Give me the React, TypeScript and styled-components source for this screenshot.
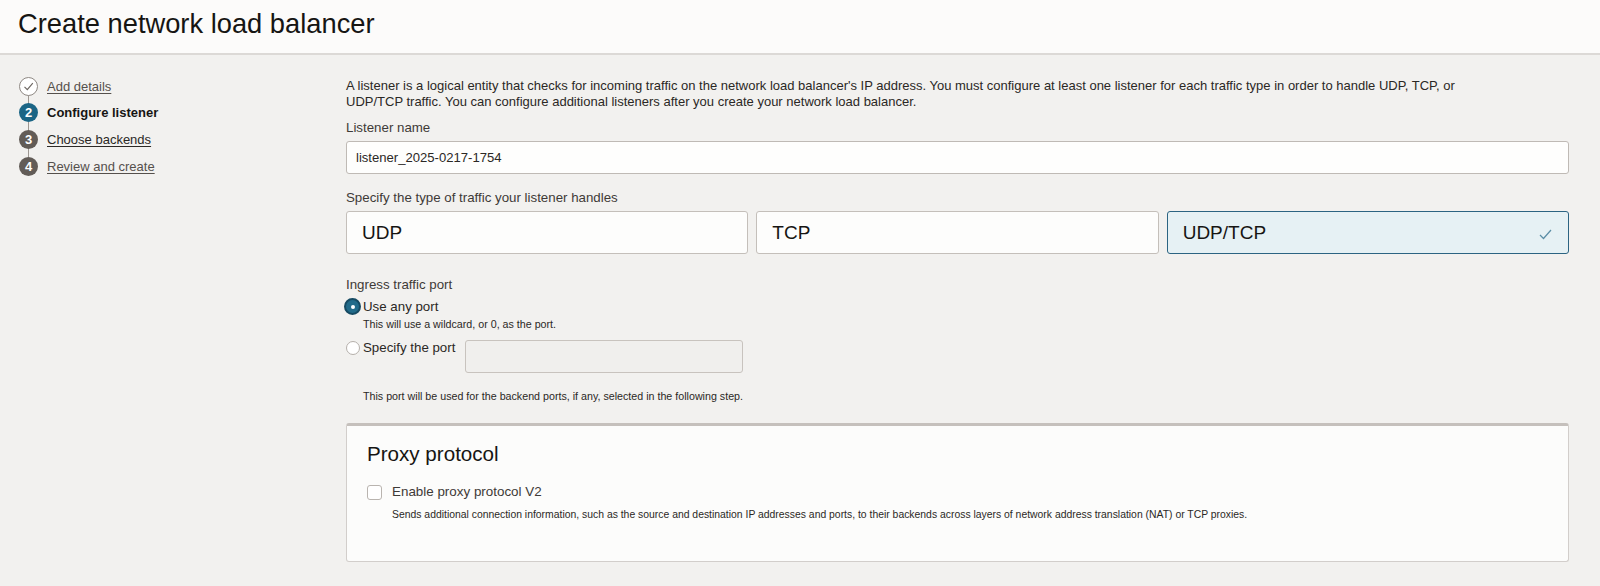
import React, { useState } from 'react';
import styled, { createGlobalStyle, css } from 'styled-components';

const GlobalStyle = createGlobalStyle`
  html, body {
    margin: 0;
    padding: 0;
    background: #f2f1ef;
    font-family: 'Liberation Sans', Arial, sans-serif;
    color: #161513;
  }
`;

const Page = styled.div`
  width: 1600px;
  height: 586px;
  background: #f2f1ef;
  overflow: hidden;
`;

const Header = styled.header`
  height: 55px;
  box-sizing: border-box;
  padding: 10px 0 0 18px;
  background: #fcfbfa;
  border-bottom: 2px solid #dcd9d6;

  h1 {
    margin: 0;
    font-size: 27.3px;
    line-height: 27px;
    font-weight: 400;
    color: #161513;
  }
`;

const Main = styled.div`
  display: flex;
  padding: 0 31px 0 19px;
`;

const Sidebar = styled.nav`
  width: 327px;
  flex-shrink: 0;
  padding-top: 18px;
`;

const StepList = styled.ol`
  list-style: none;
  margin: 0;
  padding: 0;
`;

const StepItem = styled.li`
  position: relative;
  display: flex;
  align-items: center;
  gap: 9px;
  height: 26.67px;

  &:not(:last-child)::after {
    content: '';
    position: absolute;
    left: 9px;
    top: 22px;
    height: 9px;
    width: 1px;
    background: #9e9892;
  }
`;

type StepState = 'done' | 'current' | 'todo';

const StepCircle = styled.span<{ $state: StepState }>`
  position: relative;
  z-index: 1;
  width: 19px;
  height: 19px;
  box-sizing: border-box;
  border-radius: 50%;
  display: flex;
  align-items: center;
  justify-content: center;
  font-size: 13px;
  font-weight: 700;
  color: #fff;
  flex-shrink: 0;

  ${({ $state }) =>
    $state === 'done'
      ? css`
          background: #fff;
          border: 1px solid #8f8984;
        `
      : $state === 'current'
        ? css`
            background: #1b6585;
          `
        : css`
            background: #625c57;
          `}
`;

const StepLabel = styled.a<{ $current?: boolean; $dark?: boolean }>`
  font-size: 13px;
  color: ${({ $dark }) => ($dark ? '#2c2926' : '#55504c')};
  text-decoration: underline;
  text-underline-offset: 2px;
  cursor: pointer;

  ${({ $current }) =>
    $current &&
    css`
      color: #161513;
      font-weight: 700;
      text-decoration: none;
    `}
`;

const Content = styled.section`
  flex: 1;
  padding-top: 23px;
`;

const Intro = styled.p`
  margin: 0;
  font-size: 13px;
  line-height: 16px;
  color: #2b2825;
`;

const FieldLabel = styled.div<{ $top?: number }>`
  font-size: 13.3px;
  line-height: 16px;
  color: #3e3a37;
  margin-top: ${({ $top }) => $top ?? 0}px;
  margin-bottom: 5px;
`;

const TextInput = styled.input`
  display: block;
  box-sizing: border-box;
  width: 100%;
  height: 33px;
  padding: 0 9px;
  border: 1px solid #bfbab5;
  border-radius: 3px;
  background: #fefefd;
  font-family: inherit;
  font-size: 13.1px;
  color: #2b2825;
  outline: none;
`;

const TileGrid = styled.div`
  display: grid;
  grid-template-columns: repeat(3, 1fr);
  gap: 8px;
`;

const Tile = styled.button<{ $selected: boolean }>`
  position: relative;
  height: 43px;
  box-sizing: border-box;
  display: flex;
  align-items: center;
  padding: 0 15px;
  border-radius: 3px;
  font-family: inherit;
  font-size: 19px;
  color: #161513;
  text-align: left;
  cursor: pointer;
  border: 1px solid ${({ $selected }) => ($selected ? '#2c6482' : '#c4bfba')};
  background: ${({ $selected }) => ($selected ? '#e6f1f4' : '#fdfdfc')};

  svg {
    position: absolute;
    right: 16px;
    top: 16px;
  }
`;

const RadioGroup = styled.div`
  display: flex;
  flex-direction: column;
`;

const RadioRow = styled.label`
  display: flex;
  align-items: flex-start;
  gap: 2px;
  margin-left: -2px;
  cursor: pointer;
`;

const RadioSlot = styled.span`
  width: 17px;
  height: 17px;
  flex-shrink: 0;
  display: flex;
  align-items: center;
  justify-content: center;
`;

const RadioDot = styled.span<{ $checked: boolean }>`
  box-sizing: border-box;
  border-radius: 50%;
  display: flex;
  align-items: center;
  justify-content: center;

  ${({ $checked }) =>
    $checked
      ? css`
          width: 17px;
          height: 17px;
          background: #226b8a;
          border: 2px solid #174b63;
          &::after {
            content: '';
            width: 4px;
            height: 4px;
            border-radius: 50%;
            background: #fff;
          }
        `
      : css`
          width: 14px;
          height: 14px;
          background: #fff;
          border: 1px solid #b5b0ab;
        `}
`;

const RadioText = styled.span`
  font-size: 13.3px;
  line-height: 17px;
  color: #2b2825;
`;

const HelpText = styled.div<{ $top?: number; $left?: number; $size?: number }>`
  font-size: ${({ $size }) => $size ?? 10.7}px;
  line-height: 12px;
  color: #2b2825;
  margin-top: ${({ $top }) => $top ?? 0}px;
  padding-left: ${({ $left }) => $left ?? 0}px;
`;

const PortRow = styled.div`
  display: flex;
  align-items: flex-start;
  margin-top: 9px;
`;

const PortInput = styled.input`
  box-sizing: border-box;
  width: 278px;
  height: 33px;
  margin-left: 10px;
  margin-top: 1px;
  border: 1px solid #c8c3be;
  border-radius: 3px;
  background: #f0efed;
`;

const Panel = styled.div`
  margin-top: 21px;
  box-sizing: border-box;
  height: 139px;
  background: #fcfcfb;
  border: 1px solid #d2cecb;
  border-top: 3px solid #c5c0bc;
  border-radius: 3px;
  padding: 16px 20px 0;

  h2 {
    margin: 0;
    font-size: 20.6px;
    line-height: 24px;
    font-weight: 400;
    color: #161513;
  }
`;

const CheckRow = styled.label`
  display: flex;
  align-items: center;
  gap: 10px;
  margin-top: 18px;
  cursor: pointer;
`;

const CheckBox = styled.span`
  width: 15px;
  height: 15px;
  box-sizing: border-box;
  border: 1px solid #b9b4af;
  border-radius: 3px;
  background: #fff;
`;

const CheckText = styled.span`
  font-size: 13.4px;
  line-height: 16px;
  color: #3e3a37;
`;

const steps: { label: string; state: StepState; dark?: boolean }[] = [
  { label: 'Add details', state: 'done' },
  { label: 'Configure listener', state: 'current' },
  { label: 'Choose backends', state: 'todo', dark: true },
  { label: 'Review and create', state: 'todo' },
];

const trafficTypes = ['UDP', 'TCP', 'UDP/TCP'];

function App() {
  const [traffic, setTraffic] = useState('UDP/TCP');
  const [anyPort, setAnyPort] = useState(true);

  return (
    <Page>
      <GlobalStyle />
      <Header>
        <h1>Create network load balancer</h1>
      </Header>
      <Main>
        <Sidebar>
          <StepList>
            {steps.map((step, i) => (
              <StepItem key={step.label}>
                <StepCircle $state={step.state}>
                  {step.state === 'done' ? (
                    <svg width="13" height="13" viewBox="0 0 13 13">
                      <path
                        d="M2.5 6.8 L5.3 9.6 L10.8 3.2"
                        fill="none"
                        stroke="#6d6762"
                        strokeWidth="1.2"
                      />
                    </svg>
                  ) : (
                    i + 1
                  )}
                </StepCircle>
                <StepLabel $current={step.state === 'current'} $dark={step.dark}>
                  {step.label}
                </StepLabel>
              </StepItem>
            ))}
          </StepList>
        </Sidebar>
        <Content>
          <Intro>
            A listener is a logical entity that checks for incoming traffic on the network load
            balancer's IP address. You must configure at least one listener for each traffic type
            in order to handle UDP, TCP, or
            <br />
            UDP/TCP traffic. You can configure additional listeners after you create your network
            load balancer.
          </Intro>
          <FieldLabel $top={10}>Listener name</FieldLabel>
          <TextInput defaultValue="listener_2025-0217-1754" />
          <FieldLabel $top={16}>Specify the type of traffic your listener handles</FieldLabel>
          <TileGrid>
            {trafficTypes.map(t => (
              <Tile key={t} $selected={traffic === t} onClick={() => setTraffic(t)}>
                {t}
                {traffic === t && (
                  <svg width="13" height="13" viewBox="0 0 13 13">
                    <path
                      d="M1 7 L4.5 10.5 L12 2"
                      fill="none"
                      stroke="#5b8ea6"
                      strokeWidth="1.2"
                    />
                  </svg>
                )}
              </Tile>
            ))}
          </TileGrid>
          <FieldLabel $top={23}>Ingress traffic port</FieldLabel>
          <RadioGroup>
            <RadioRow onClick={() => setAnyPort(true)}>
              <RadioSlot>
                <RadioDot $checked={anyPort} />
              </RadioSlot>
              <RadioText>Use any port</RadioText>
            </RadioRow>
            <HelpText $top={3} $left={17}>
              This will use a wildcard, or 0, as the port.
            </HelpText>
            <PortRow>
              <RadioRow onClick={() => setAnyPort(false)}>
                <RadioSlot>
                  <RadioDot $checked={!anyPort} />
                </RadioSlot>
                <RadioText>Specify the port</RadioText>
              </RadioRow>
              <PortInput disabled={anyPort} />
            </PortRow>
            <HelpText $top={17} $left={17}>
              This port will be used for the backend ports, if any, selected in the following
              step.
            </HelpText>
          </RadioGroup>
          <Panel>
            <h2>Proxy protocol</h2>
            <CheckRow>
              <CheckBox />
              <CheckText>Enable proxy protocol V2</CheckText>
            </CheckRow>
            <HelpText $top={9} $left={25} $size={10.4}>
              Sends additional connection information, such as the source and destination IP
              addresses and ports, to their backends across layers of network address translation
              (NAT) or TCP proxies.
            </HelpText>
          </Panel>
        </Content>
      </Main>
    </Page>
  );
}

export default App;
